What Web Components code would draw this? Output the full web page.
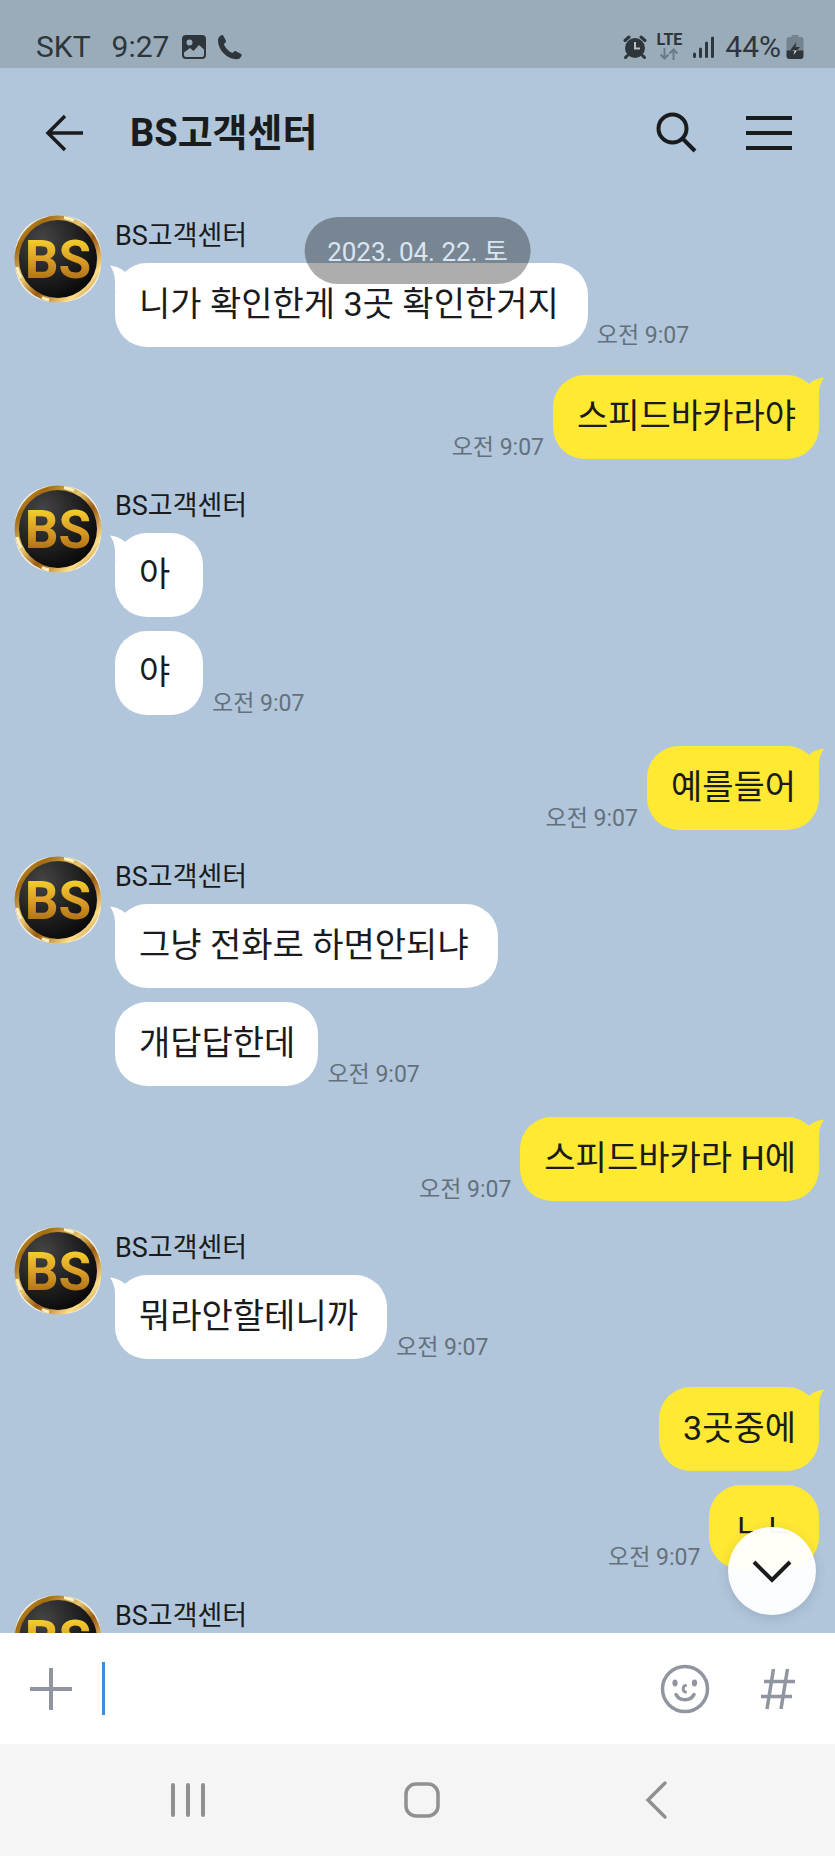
<!DOCTYPE html>
<html lang="ko">
<head>
<meta charset="utf-8">
<meta name="viewport" content="width=device-width, initial-scale=1">
<title>BS고객센터</title>
<style>
  html, body { margin: 0; height: 100%; }
  body {
    --ink: #191b1d;
    --chat-bg: #b1c6db;
    font-family: Roboto, "Noto Sans CJK KR", sans-serif;
    color: var(--ink);
  }
</style>
</head>
<body>
<chat-app>
  <status-bar slot="top"></status-bar>
  <chat-header slot="top">BS고객센터</chat-header>
  <date-pill slot="over">2023. 04. 22. 토</date-pill>
  <scroll-down slot="over"></scroll-down>

  <message-group name="BS고객센터">
    <chat-bubble tail time="오전 9:07">니가 확인한게 3곳 확인한거지</chat-bubble>
  </message-group>
  <message-group mine>
    <chat-bubble mine tail time="오전 9:07">스피드바카라야</chat-bubble>
  </message-group>
  <message-group name="BS고객센터" several>
    <chat-bubble tail>아</chat-bubble>
    <chat-bubble time="오전 9:07">야</chat-bubble>
  </message-group>
  <message-group mine>
    <chat-bubble mine tail time="오전 9:07">예를들어</chat-bubble>
  </message-group>
  <message-group name="BS고객센터" several>
    <chat-bubble tail>그냥 전화로 하면안되냐</chat-bubble>
    <chat-bubble time="오전 9:07">개답답한데</chat-bubble>
  </message-group>
  <message-group mine>
    <chat-bubble mine tail time="오전 9:07">스피드바카라 H에</chat-bubble>
  </message-group>
  <message-group name="BS고객센터">
    <chat-bubble tail time="오전 9:07">뭐라안할테니까</chat-bubble>
  </message-group>
  <message-group mine>
    <chat-bubble mine tail>3곳중에</chat-bubble>
    <chat-bubble mine time="오전 9:07">ㄴㄴ</chat-bubble>
  </message-group>
  <message-group name="BS고객센터"></message-group>

  <message-input slot="bottom"></message-input>
  <system-nav slot="bottom"></system-nav>
</chat-app>

<script>
const define = (name, html, setup) => {
  const template = document.createElement('template');
  template.innerHTML = html;
  customElements.define(name, class extends HTMLElement {
    constructor() {
      super();
      this.attachShadow({ mode: 'open' }).append(template.content.cloneNode(true));
    }
    connectedCallback() { if (setup) setup(this, this.shadowRoot); }
  });
};

const buttonCss = `
  button { display: grid; place-items: center; padding: 0; border: 0; background: none; color: inherit; cursor: pointer; }
  svg { display: block; }`;

define('chat-app', `
  <style>
    :host { display: flex; flex-direction: column; height: 100vh; background: var(--chat-bg); }
    main { position: relative; flex: 1; min-height: 0; overflow: hidden; }
    .list { display: flex; flex-direction: column; padding: 17px 16px 0 14px; }
  </style>
  <slot name="top"></slot>
  <main>
    <div class="list"><slot></slot></div>
    <slot name="over"></slot>
  </main>
  <slot name="bottom"></slot>`);

define('status-bar', `
  <style>
    :host { display: flex; justify-content: space-between; box-sizing: border-box; height: 68px;
      padding: 25px 31px 0 36px; background: #9aacba; color: #2e363b; font-size: 30px; line-height: 44px; }
    div { display: flex; align-items: center; height: 43px; }
    .time { margin: 0 12px 0 21px; }
    .phone { margin-left: 10px; }
    .right { gap: 10px; }
    .lte { display: grid; align-content: center; justify-items: center; gap: 2px; font-size: 16px; font-weight: 700; line-height: 13px; }
    .power { gap: 5px; }
    svg { display: block; }
  </style>
  <div class="left">
    <span>SKT</span><span class="time">9:27</span>
    <svg width="26" height="26" viewBox="0 0 26 26"><path fill="currentColor" fill-rule="evenodd" d="M5 1h16a4 4 0 0 1 4 4v16a4 4 0 0 1-4 4H5a4 4 0 0 1-4-4V5a4 4 0 0 1 4-4zM3 18.500V21a2 2 0 0 0 2 2h16a2 2 0 0 0 2-2v-5.500L18 11l-5.500 6L9 14zM8.500 5.500a3 3 0 1 0 0 6 3 3 0 0 0 0-6z"/></svg>
    <svg class="phone" width="26" height="26" viewBox="0 0 26 26"><path fill="currentColor" d="M1 6C1 4 2.500 2 4.500 1.200c1-.4 1.600 0 2.100 1l2.200 4.300c.4.900.2 1.500-.4 2.100L6.800 10.200c1.700 3.800 4.600 6.900 8.500 8.900l2-1.600c.6-.5 1.300-.5 2-.1l4.400 2.400c1 .5 1.200 1.200.8 2.100-.9 2-2.700 3.300-5 3.300C10 25.200 1 16 1 6z"/></svg>
  </div>
  <div class="right">
    <svg width="24" height="24" viewBox="0 0 24 24"><circle cx="12" cy="13" r="10" fill="currentColor"/><path d="M2 5.500 6 2M22 5.500 18 2M4.500 20.500 2.500 22.500M19.500 20.500l2 2" stroke="currentColor" stroke-width="3" stroke-linecap="round"/><path d="M12 7v6.500h5" fill="none" stroke="#b4c0c9" stroke-width="2"/></svg>
    <div class="lte"><span>LTE</span>
      <svg width="18" height="12" viewBox="0 0 18 12" fill="none" stroke="#6c7a85" stroke-width="2"><path d="M4.500 0v10.500M.500 6.500l4 4 4-4M13.500 12V1.500M9.500 5.500l4-4 4 4"/></svg></div>
    <svg width="23" height="24" viewBox="0 0 23 24" stroke="currentColor" stroke-width="3" stroke-linecap="round"><path d="M2.500 19v2.500M8.500 14v7.500M14.500 8v13.500M20.500 3v18.500"/></svg>
    <div class="power"><span>44%</span>
      <svg width="18" height="26" viewBox="0 0 18 26"><path fill="#74838d" d="M5.500 1h7v2H15a2.500 2.500 0 0 1 2.500 2.500V17H.500V5.500A2.500 2.500 0 0 1 3 3h2.500z"/><path fill="currentColor" d="M.500 16.500h17V22a3 3 0 0 1-3 3h-11a3 3 0 0 1-3-3z"/><path fill="currentColor" d="M10.500 8 4 16.500h5l-1.500 4 6.500-7.500H9.500z"/><path fill="#dbe3e8" d="M5.500 16.500H11l-3.500 4.500 1-4z"/></svg></div>
  </div>`);

define('chat-header', `
  <style>${buttonCss}
    :host { display: flex; align-items: center; height: 130px; padding: 0 38px 0 36px; }
    button { width: 56px; height: 56px; }
    h1 { flex: 1; margin: 0 0 0 38px; font-size: 38px; font-weight: 700; line-height: 48px; }
    .menu { margin-left: 36px; }
  </style>
  <button aria-label="뒤로"><svg width="40" height="40" viewBox="0 0 40 40" fill="none" stroke="currentColor" stroke-width="3.500"><path d="M21 3 4 20l17 17M4 20h35"/></svg></button>
  <h1><slot></slot></h1>
  <button aria-label="검색"><svg width="44" height="44" viewBox="0 0 44 44" fill="none" stroke="currentColor" stroke-width="4"><circle cx="17.500" cy="17.500" r="14"/><path d="M27.500 27.500 40 40"/></svg></button>
  <button class="menu" aria-label="메뉴"><svg width="48" height="40" viewBox="0 0 48 40" stroke="currentColor" stroke-width="4"><path d="M1 5h46M1 20h46M1 35h46"/></svg></button>`);

define('date-pill', `
  <style>
    :host { position: absolute; top: 19px; left: 50%; transform: translateX(-50%);
      padding: 18px 23px 15px; border-radius: 34px; background: rgba(0, 0, 0, .32);
      color: #d9e5f0; font-size: 26px; line-height: 34px; white-space: nowrap; }
  </style>
  <slot></slot>`);

define('scroll-down', `
  <style>${buttonCss}
    :host { position: absolute; right: 19px; bottom: 18px; }
    button { width: 88px; height: 88px; border-radius: 50%; background: rgba(255, 255, 255, .96);
      color: var(--ink); box-shadow: 0 3px 12px rgba(40, 60, 80, .16); }
  </style>
  <button aria-label="맨 아래로"><svg width="40" height="24" viewBox="0 0 40 24" fill="none" stroke="currentColor" stroke-width="4"><path d="M2 3l18 18L38 3"/></svg></button>`);

define('bs-avatar', `
  <style>
    :host { display: block; width: 88px; height: 88px; }
    svg { display: block; }
    text { font-family: Roboto, sans-serif; font-weight: 700; }
  </style>
  <svg width="88" height="88" viewBox="0 0 88 88" role="img">
    <defs>
      <linearGradient id="gold" x1="0" y1="0" x2="0" y2="1"><stop offset="0" stop-color="#ffe72e"/><stop offset=".5" stop-color="#dc9e28"/><stop offset="1" stop-color="#92570c"/></linearGradient>
      <linearGradient id="rim" x1="0" y1="0" x2="1" y2="1"><stop offset="0" stop-color="#e2b23d"/><stop offset=".2" stop-color="#a26b12"/><stop offset=".42" stop-color="#e8c76e"/><stop offset=".58" stop-color="#9b5b10"/><stop offset=".8" stop-color="#ffe08a"/><stop offset="1" stop-color="#8a4a08"/></linearGradient>
      <radialGradient id="face" cx=".3" cy=".25" r=".9"><stop offset="0" stop-color="#454545"/><stop offset=".5" stop-color="#222"/><stop offset="1" stop-color="#030303"/></radialGradient>
    </defs>
    <rect x="1" y="1" width="86" height="86" rx="38" fill="#f3f0e8"/>
    <circle cx="44" cy="44" r="43.500" fill="url(#rim)"/>
    <path d="M50 2.500a42 42 0 0 1 10 3M3 52a42 42 0 0 0 4 11M28 82.500a42 42 0 0 0 7 2.500" fill="none" stroke="#fff1bd" stroke-width="3"/>
    <circle cx="44" cy="44" r="39" fill="url(#face)"/>
    <text x="44" y="63" font-size="53" text-anchor="middle" fill="url(#gold)">BS</text>
  </svg>`);

define('message-group', `
  <style>
    :host { display: grid; grid-template-columns: 88px 1fr; column-gap: 13px; align-items: start; margin-bottom: 28px; }
    :host([several]) { margin-bottom: 31px; }
    :host([mine]) { display: block; margin-bottom: 26px; }
    :host([mine]) bs-avatar, :host([mine]) .name { display: none; }
    .name { height: 48px; padding-top: 3px; box-sizing: border-box; font-size: 27px; line-height: 36px; }
    .bubbles { display: flex; flex-direction: column; gap: 14px; }
  </style>
  <bs-avatar></bs-avatar>
  <div>
    <div class="name"></div>
    <div class="bubbles"><slot></slot></div>
  </div>`, (host, root) => {
    root.querySelector('.name').textContent = host.getAttribute('name') || '';
  });

define('chat-bubble', `
  <style>
    :host { display: flex; align-items: flex-end; gap: 9px; --fill: #fff; }
    :host([mine]) { flex-direction: row-reverse; --fill: #ffe933; }
    .bubble { position: relative; box-sizing: border-box; min-width: 88px; padding: 19px 23px 21px 24px;
      border-radius: 32px; background: var(--fill); font-size: 34px; line-height: 44px; }
    :host([tail]:not([mine])) .bubble { padding-right: 29px; }
    svg { position: absolute; top: 2px; left: -5px; display: none; fill: var(--fill); }
    :host([tail]) svg { display: block; }
    :host([mine]) svg { left: auto; right: -5px; transform: scaleX(-1); }
    time { color: #64717c; font-size: 23px; line-height: 22px; }
  </style>
  <div class="bubble"><svg width="22" height="26" viewBox="0 0 22 26"><path d="M0 .500C6 1 11 3 14.500 6.500L22 12V26H5V17C5 10 3 5 0 .500z"/></svg><slot></slot></div>
  <time></time>`, (host, root) => {
    const time = root.querySelector('time');
    if (host.hasAttribute('time')) time.textContent = host.getAttribute('time');
    else time.remove();
  });

define('message-input', `
  <style>${buttonCss}
    :host { display: flex; align-items: center; height: 111px; padding: 0 29px 0 28px; background: #fff; color: #9095a0; }
    button { width: 56px; height: 56px; }
    .plus { width: 46px; }
    .field { display: flex; flex: 1; align-items: center; margin: 0 28px; }
    .caret { width: 3px; height: 53px; background: #3b8ede; }
    input { flex: 1; min-width: 0; height: 56px; padding: 0; border: 0; outline: 0; background: none; color: var(--ink); font: inherit; font-size: 34px; }
    .hash { margin-left: 37px; }
  </style>
  <button class="plus" aria-label="첨부"><svg width="42" height="42" viewBox="0 0 42 42" stroke="currentColor" stroke-width="4"><path d="M21 0v42M0 21h42"/></svg></button>
  <div class="field"><span class="caret"></span><input type="text" aria-label="메시지 입력"></div>
  <button aria-label="이모티콘"><svg width="50" height="50" viewBox="0 0 50 50" fill="none" stroke="currentColor" stroke-width="3.500" stroke-linecap="round"><circle cx="25" cy="25" r="22.500"/><path d="M16 30.500c3.500 7 14.500 7 18 0"/><path d="M25.500 21.500c-3 .5-3 6 0 6.500" stroke-width="3"/><g fill="currentColor" stroke="none"><ellipse cx="15" cy="19" rx="2.600" ry="3.400"/><ellipse cx="34.500" cy="19" rx="2.600" ry="3.400"/></g></svg></button>
  <button class="hash" aria-label="샵 검색"><svg width="36" height="42" viewBox="0 0 36 42" fill="none" stroke="currentColor" stroke-width="3.500"><path d="M13.500 1 7 41M27.500 1 21 41M4 13.500h31M1 28.500h31"/></svg></button>`);

define('system-nav', `
  <style>${buttonCss}
    :host { display: grid; grid-template-columns: 1fr 1fr 1fr; height: 112px; padding: 0 62px 0 71px; background: #f5f5f5; color: #909090; }
    button { height: 112px; }
  </style>
  <button aria-label="최근 앱"><svg width="36" height="36" viewBox="0 0 36 36" stroke="currentColor" stroke-width="4" stroke-linecap="round"><path d="M3 3v30M18 3v30M33 3v30"/></svg></button>
  <button aria-label="홈"><svg width="38" height="38" viewBox="0 0 38 38" fill="none" stroke="currentColor" stroke-width="3.500"><rect x="3" y="3" width="32" height="32" rx="10"/></svg></button>
  <button aria-label="뒤로"><svg width="24" height="40" viewBox="0 0 24 40" fill="none" stroke="currentColor" stroke-width="3.500" stroke-linecap="round"><path d="M21 3 4 20l17 17"/></svg></button>`);
</script>
</body>
</html>
